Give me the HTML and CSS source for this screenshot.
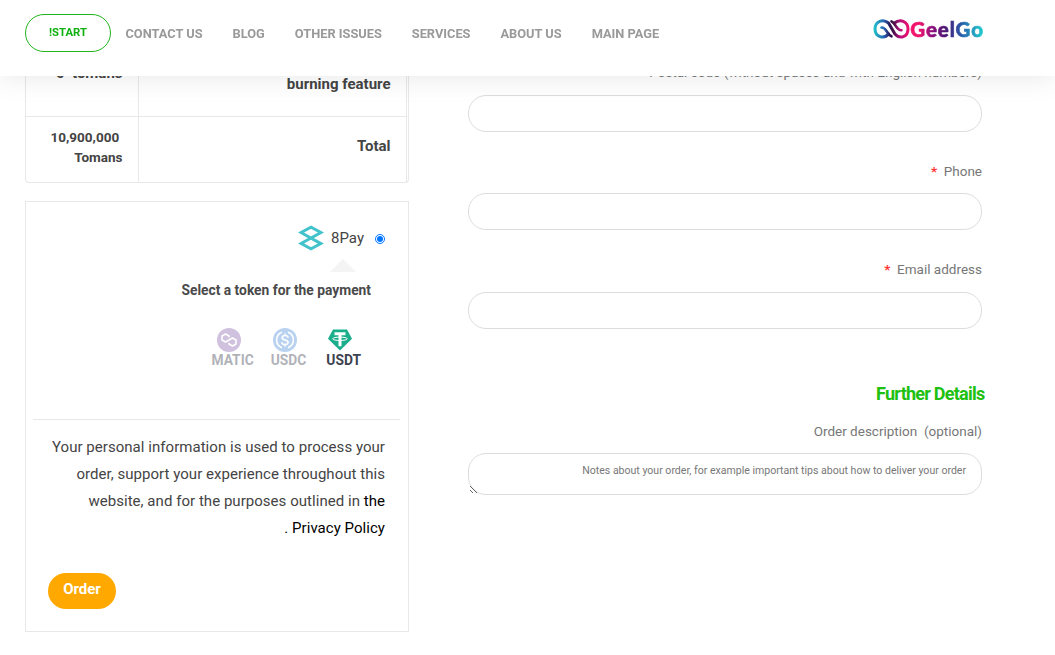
FILE: index.html
```
<!DOCTYPE html>
<html lang="en">
<head>
    <meta charset="UTF-8">
    <meta name="viewport" content="width=device-width, initial-scale=1.0">
    <title>GeelGo</title>
    <link rel="stylesheet" href="styles.css">
</head>
<body>
    <header class="top-nav">
        <a class="start-btn">!START</a>
        <nav class="menu">
            <a>CONTACT US</a>
            <a>BLOG</a>
            <a>OTHER ISSUES</a>
            <a>SERVICES</a>
            <a>ABOUT US</a>
            <a>MAIN PAGE</a>
        </nav>
        <div class="logo">
            <svg width="37" height="20" viewBox="0 0 37 20" fill="none" stroke-width="3" stroke-linecap="round">
                <defs>
                    <linearGradient id="loop" gradientUnits="userSpaceOnUse" x1="1" y1="0" x2="36" y2="0">
                        <stop offset="0" stop-color="#20c3c9"/>
                        <stop offset=".3" stop-color="#285db0"/>
                        <stop offset=".46" stop-color="#2b1454"/>
                        <stop offset=".56" stop-color="#4a0f48"/>
                        <stop offset=".72" stop-color="#b0107a"/>
                        <stop offset="1" stop-color="#f0106f"/>
                    </linearGradient>
                </defs>
                <path stroke="url(#loop)" d="M15.500 15C11 20.500 2 18 2 10S10-.5 15.500 4L22 15C27 20.500 35 18 35 10S27-.5 21.500 4"/>
                <path stroke="url(#loop)" stroke-width="2.600" d="M8.500 8.500c5-.5 5 7 10 8.800M28.500 11.200c-5 .5-5.500-6.700-10-8.800"/>
            </svg>
            <span class="logo-text">GeelGo</span>
        </div>
    </header>

    <main class="checkout">
        <section class="order-col">
            <table class="order-table">
                <tr class="fee-row">
                    <td>0&nbsp; tomans</td>
                    <th>burning feature</th>
                </tr>
                <tr class="total-row">
                    <td>10,900,000&nbsp;<br>Tomans</td>
                    <th>Total</th>
                </tr>
            </table>

            <div class="payment">
                <label class="pay-method">
                    <svg width="26" height="26" viewBox="0 0 26 26" fill="none" stroke="#42c3cb" stroke-width="3">
                        <path d="M22.500 18.500 3 7.500 13 2.200 23 7.500 3 18.500 13 23.800 23 18.500 17.500 15.500"/>
                    </svg>
                    <span>8Pay</span>
                    <input type="radio" name="payment" checked>
                </label>
                <div class="arrow-up"></div>
                <h4>Select a token for the payment</h4>
                <div class="tokens">
                    <div class="token off">
                        <svg width="24" height="24" viewBox="0 0 24 24">
                            <circle cx="12" cy="12" r="12" fill="#8b66ae"/>
                            <path fill="none" stroke="#fff" stroke-width="1.600" stroke-linejoin="round" d="M12 9.200V8L8.500 6 5 8v4l3.500 2 7-4L19 12v4l-3.500 2-3.500-2v-1.200"/>
                        </svg>
                        <span>MATIC</span>
                    </div>
                    <div class="token off">
                        <svg width="24" height="24" viewBox="0 0 24 24" fill="none" stroke="#fff" stroke-width="1.600">
                            <circle cx="12" cy="12" r="12" fill="#4f91dc" stroke="none"/>
                            <path d="M9 4.300a8.200 8.200 0 0 0 0 15.400M15 4.300a8.200 8.200 0 0 1 0 15.400"/>
                            <path d="M15 9.700c0-3-5.800-3-5.800 0 0 3.200 5.900 1.400 5.900 4.700 0 2.900-6.200 2.900-6.200-.2M12 5.500v2M12 16.500v2"/>
                        </svg>
                        <span>USDC</span>
                    </div>
                    <div class="token">
                        <svg width="24" height="24" viewBox="0 0 24 24">
                            <path fill="#1bae8c" d="M5 1.500h14l5 9.200L12 22.500 0 10.700z"/>
                            <path fill="#fff" d="M6.500 4.200h11v3h-4v11h-3v-11h-4z"/>
                            <ellipse cx="12" cy="10.800" rx="7.300" ry="1.700" fill="none" stroke="#fff"/>
                        </svg>
                        <span>USDT</span>
                    </div>
                </div>
                <div class="privacy">
                    <p>Your personal information is used to process your<br>order, support your experience throughout this<br>website, and for the purposes outlined in <a>the<br>. Privacy Policy</a></p>
                </div>
                <button class="order-btn">Order</button>
            </div>
        </section>

        <form class="details-col">
            <div class="field">
                <label>Postal code (without spaces and with English numbers)</label>
                <input type="text">
            </div>
            <div class="field">
                <label><b>*</b>&nbsp; Phone</label>
                <input type="text">
            </div>
            <div class="field">
                <label><b>*</b>&nbsp; Email address</label>
                <input type="text">
            </div>
            <h3>Further Details</h3>
            <div class="field">
                <label>Order description&nbsp; (optional)</label>
                <textarea placeholder="Notes about your order, for example important tips about how to deliver your order"></textarea>
            </div>
        </form>
    </main>
</body>
</html>
```
FILE: styles.css
```
*{
    box-sizing: border-box;
}

body{
    margin: 0;
    height: 655px;
    overflow: hidden;
    background: #fff;
    color: #444;
    font-family: Roboto, "Liberation Sans", sans-serif;
}

/* header */
.top-nav{
    position: fixed;
    top: 0;
    left: 0;
    z-index: 10;
    width: 100%;
    height: 76px;
    padding: 14px 71px 0 25px;
    display: flex;
    align-items: flex-start;
    background: #fff;
    box-shadow: 0 0 30px rgba(0, 0, 0, 0.1);
}

.start-btn{
    width: 86px;
    height: 38px;
    border: 1px solid #20b51b;
    border-radius: 19px;
    color: #10b010;
    font-size: 11.3px;
    font-weight: 700;
    line-height: 35px;
    text-align: center;
}

.menu{
    display: flex;
    gap: 30px;
    margin-left: 14.5px;
    color: #999;
    font-size: 12.8px;
    font-weight: 700;
    line-height: 39px;
}

.logo{
    display: flex;
    align-items: center;
    margin-left: auto;
    margin-top: 5px;
    height: 20px;
}

.logo-text{
    font-family: Lato, sans-serif;
    font-size: 20.5px;
    font-weight: 900;
    letter-spacing: 0.9px;
    line-height: 24px;
    color: transparent;
    background: linear-gradient(90deg, #f2146c 12%, #8a107f 30%, #4c1674 48%, #2858a8 68%, #20c5cc 96%);
    -webkit-background-clip: text;
    background-clip: text;
    -webkit-text-stroke: 0.6px transparent;
}

/* content */
.checkout{
    display: flex;
    justify-content: space-between;
    padding: 36px 73px 0 25px;
}

.order-col{
    width: 384px;
}

.order-table{
    width: 384px;
    border: 1px solid #e8e8e8;
    border-top: 0;
    border-radius: 4px;
    border-spacing: 0;
    padding-right: 1px;
    text-align: right;
}

.order-table td,
.order-table th{
    padding: 0 15.5px;
    border-right: 1px solid #e8e8e8;
    vertical-align: top;
    text-align: right;
    line-height: 20px;
}

.order-table td{
    width: 113px;
    font-size: 13.5px;
    font-weight: 700;
}

.order-table th{
    font-size: 15px;
    font-weight: 700;
}

.fee-row td,
.fee-row th{
    height: 81px;
    border-bottom: 1px solid #e8e8e8;
}

.order-table .fee-row td{
    padding-top: 27px;
    font-size: 15px;
}

.fee-row th{
    padding-top: 38px;
}

.total-row td,
.total-row th{
    height: 65px;
}

.total-row td{
    padding-top: 10px;
}

.total-row th{
    padding-top: 19px;
}

.payment{
    height: 431px;
    margin-top: 18px;
    padding: 23px 8px 0 7px;
    border: 1px solid #e8e8e8;
}

.pay-method{
    display: flex;
    align-items: center;
    justify-content: flex-end;
    height: 26px;
    padding-right: 15px;
    font-size: 15px;
}

.pay-method span{
    margin: 0 11px 0 7px;
}

.pay-method input{
    width: 10px;
    height: 10px;
    margin: 1px 0 0;
}

.arrow-up{
    width: 0;
    margin: 8px 44px 0 auto;
    border: 13px solid transparent;
    border-top: 0;
    border-bottom-color: #f4f4f4;
}

.payment h4{
    margin: 8px 29px 0 0;
    color: #4a4a4a;
    font-size: 13.8px;
    line-height: 20px;
    text-align: right;
}

.tokens{
    display: flex;
    justify-content: flex-end;
    margin: 28px 39px 0 0;
}

.token{
    margin-left: 20px;
    font-size: 13.8px;
    font-weight: 700;
    line-height: 16px;
    color: #3d4250;
}

.token:nth-child(2){
    margin-left: 17px;
}

.token svg{
    display: block;
    margin: 0 2px 0 2px;
}

.token:first-child svg{
    margin-left: 6px;
}

.token.off{
    opacity: 0.4;
}

.privacy{
    margin-top: 51px;
    padding: 14px 15px 0 0;
    border-top: 1px solid #e8e8e8;
}

.privacy p{
    margin: 0;
    font-size: 15px;
    letter-spacing: 0.04px;
    line-height: 27px;
    text-align: right;
    white-space: nowrap;
}

.privacy a{
    color: #000;
}

.order-btn{
    width: 68px;
    height: 36px;
    margin: 31px 0 0 15px;
    padding: 0 0 4px;
    border: 0;
    border-radius: 18px;
    background: #ffa900;
    color: #fff;
    font-family: inherit;
    font-size: 15px;
    font-weight: 700;
}

/* customer details */
.details-col{
    width: 514px;
    padding-top: 26.3px;
}

.field{
    margin-bottom: 28.9px;
}

.field label{
    display: block;
    height: 20px;
    margin-bottom: 12.6px;
    color: #777;
    font-size: 13.5px;
    line-height: 20px;
    text-align: right;
}

.field label b{
    color: #f33;
}

.field input,
.field textarea{
    display: block;
    width: 100%;
    height: 37px;
    border: 1px solid #ddd;
    border-radius: 18px;
    background: #fff;
    outline: none;
}

.field textarea{
    height: 42px;
    margin-top: -0.5px;
    padding: 9px 15px;
    direction: rtl;
    font-family: inherit;
    font-size: 10.56px;
    line-height: 16px;
}

.field textarea::placeholder{
    color: #777;
}

.details-col h3{
    margin: 54px -2.5px 16px 0;
    color: #20c010;
    font-size: 18px;
    line-height: 22px;
    letter-spacing: -0.75px;
    text-align: right;
}
```
